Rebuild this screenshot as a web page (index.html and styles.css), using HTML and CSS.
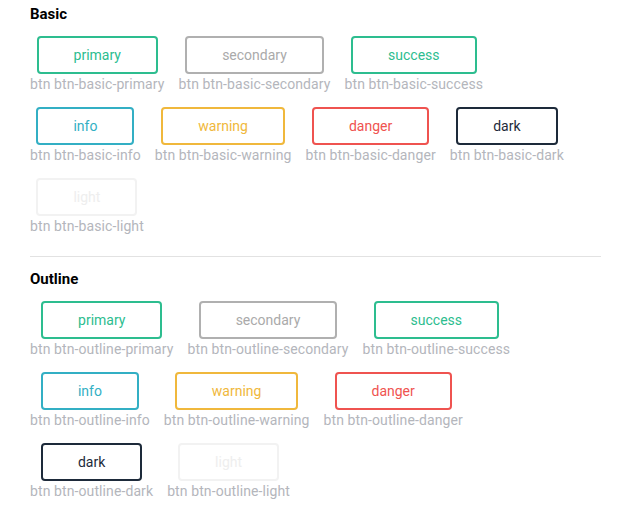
FILE: index.html
```html
<!DOCTYPE html>
<html>
<head>
<meta charset="utf-8">
<link rel="stylesheet" href="styles.css">
</head>
<body>
<div class="page">
  <section class="group">
    <h3 class="title">Basic</h3>
    <div class="rows">
      <div class="row">
        <div class="item"><button class="btn primary">primary</button><span class="cls">btn btn-basic-primary</span></div>
        <div class="item"><button class="btn secondary">secondary</button><span class="cls">btn btn-basic-secondary</span></div>
        <div class="item"><button class="btn success">success</button><span class="cls">btn btn-basic-success</span></div>
      </div>
      <div class="row">
        <div class="item"><button class="btn info">info</button><span class="cls">btn btn-basic-info</span></div>
        <div class="item"><button class="btn warning">warning</button><span class="cls">btn btn-basic-warning</span></div>
        <div class="item"><button class="btn danger">danger</button><span class="cls">btn btn-basic-danger</span></div>
        <div class="item"><button class="btn dark">dark</button><span class="cls">btn btn-basic-dark</span></div>
      </div>
      <div class="row">
        <div class="item"><button class="btn light">light</button><span class="cls">btn btn-basic-light</span></div>
      </div>
    </div>
  </section>
  <section class="group second">
    <h3 class="title">Outline</h3>
    <div class="rows">
      <div class="row">
        <div class="item"><button class="btn primary">primary</button><span class="cls">btn btn-outline-primary</span></div>
        <div class="item"><button class="btn secondary">secondary</button><span class="cls">btn btn-outline-secondary</span></div>
        <div class="item"><button class="btn success">success</button><span class="cls">btn btn-outline-success</span></div>
      </div>
      <div class="row">
        <div class="item"><button class="btn info">info</button><span class="cls">btn btn-outline-info</span></div>
        <div class="item"><button class="btn warning">warning</button><span class="cls">btn btn-outline-warning</span></div>
        <div class="item"><button class="btn danger">danger</button><span class="cls">btn btn-outline-danger</span></div>
      </div>
      <div class="row">
        <div class="item"><button class="btn dark">dark</button><span class="cls">btn btn-outline-dark</span></div>
        <div class="item"><button class="btn light">light</button><span class="cls">btn btn-outline-light</span></div>
      </div>
    </div>
  </section>
</div>
</body>
</html>
```

FILE: styles.css
```css
html, body {
  margin: 0;
  padding: 0;
  background: #ffffff;
}

body {
  font-family: Roboto, "Liberation Sans", Arial, sans-serif;
  font-size: 14px;
  color: #000;
}

.page {
  padding: 4px 18px 0 30px;
}

.group {
  padding-bottom: 20px;
  border-bottom: 1px solid #e2e2e2;
}

.group.second {
  border-bottom: none;
  padding-top: 12px;
}

.title {
  margin: 0 0 12px 0;
  font-size: 15px;
  line-height: 20px;
  font-weight: 700;
  color: #000;
}

.rows {
  display: flex;
  flex-direction: column;
  gap: 13px;
}

.row {
  display: flex;
  gap: 14px;
}

.item {
  display: flex;
  flex-direction: column;
  align-items: center;
}

.btn {
  font-family: Roboto, "Liberation Sans", Arial, sans-serif;
  font-size: 14px;
  line-height: 22px;
  padding: 6px 35px;
  border: 2px solid;
  border-radius: 4px;
  background: #ffffff;
  margin: 0;
  cursor: pointer;
}

.cls {
  font-size: 14px;
  line-height: 20px;
  letter-spacing: 0.1px;
  color: #b4b6bc;
  white-space: nowrap;
}

.primary { color: #2dbd8f; border-color: #2dbd8f; }
.secondary { color: #aaaaaa; border-color: #b0b0b0; }
.success { color: #2dbd8f; border-color: #2dbd8f; }
.info { color: #33afc4; border-color: #33afc4; }
.warning { color: #f0b83c; border-color: #f0b83c; }
.danger { color: #ef5350; border-color: #ef5350; }
.dark { color: #1d2a3a; border-color: #1d2a3a; }
.light { color: #eeeeee; border-color: #f2f2f2; }
```
